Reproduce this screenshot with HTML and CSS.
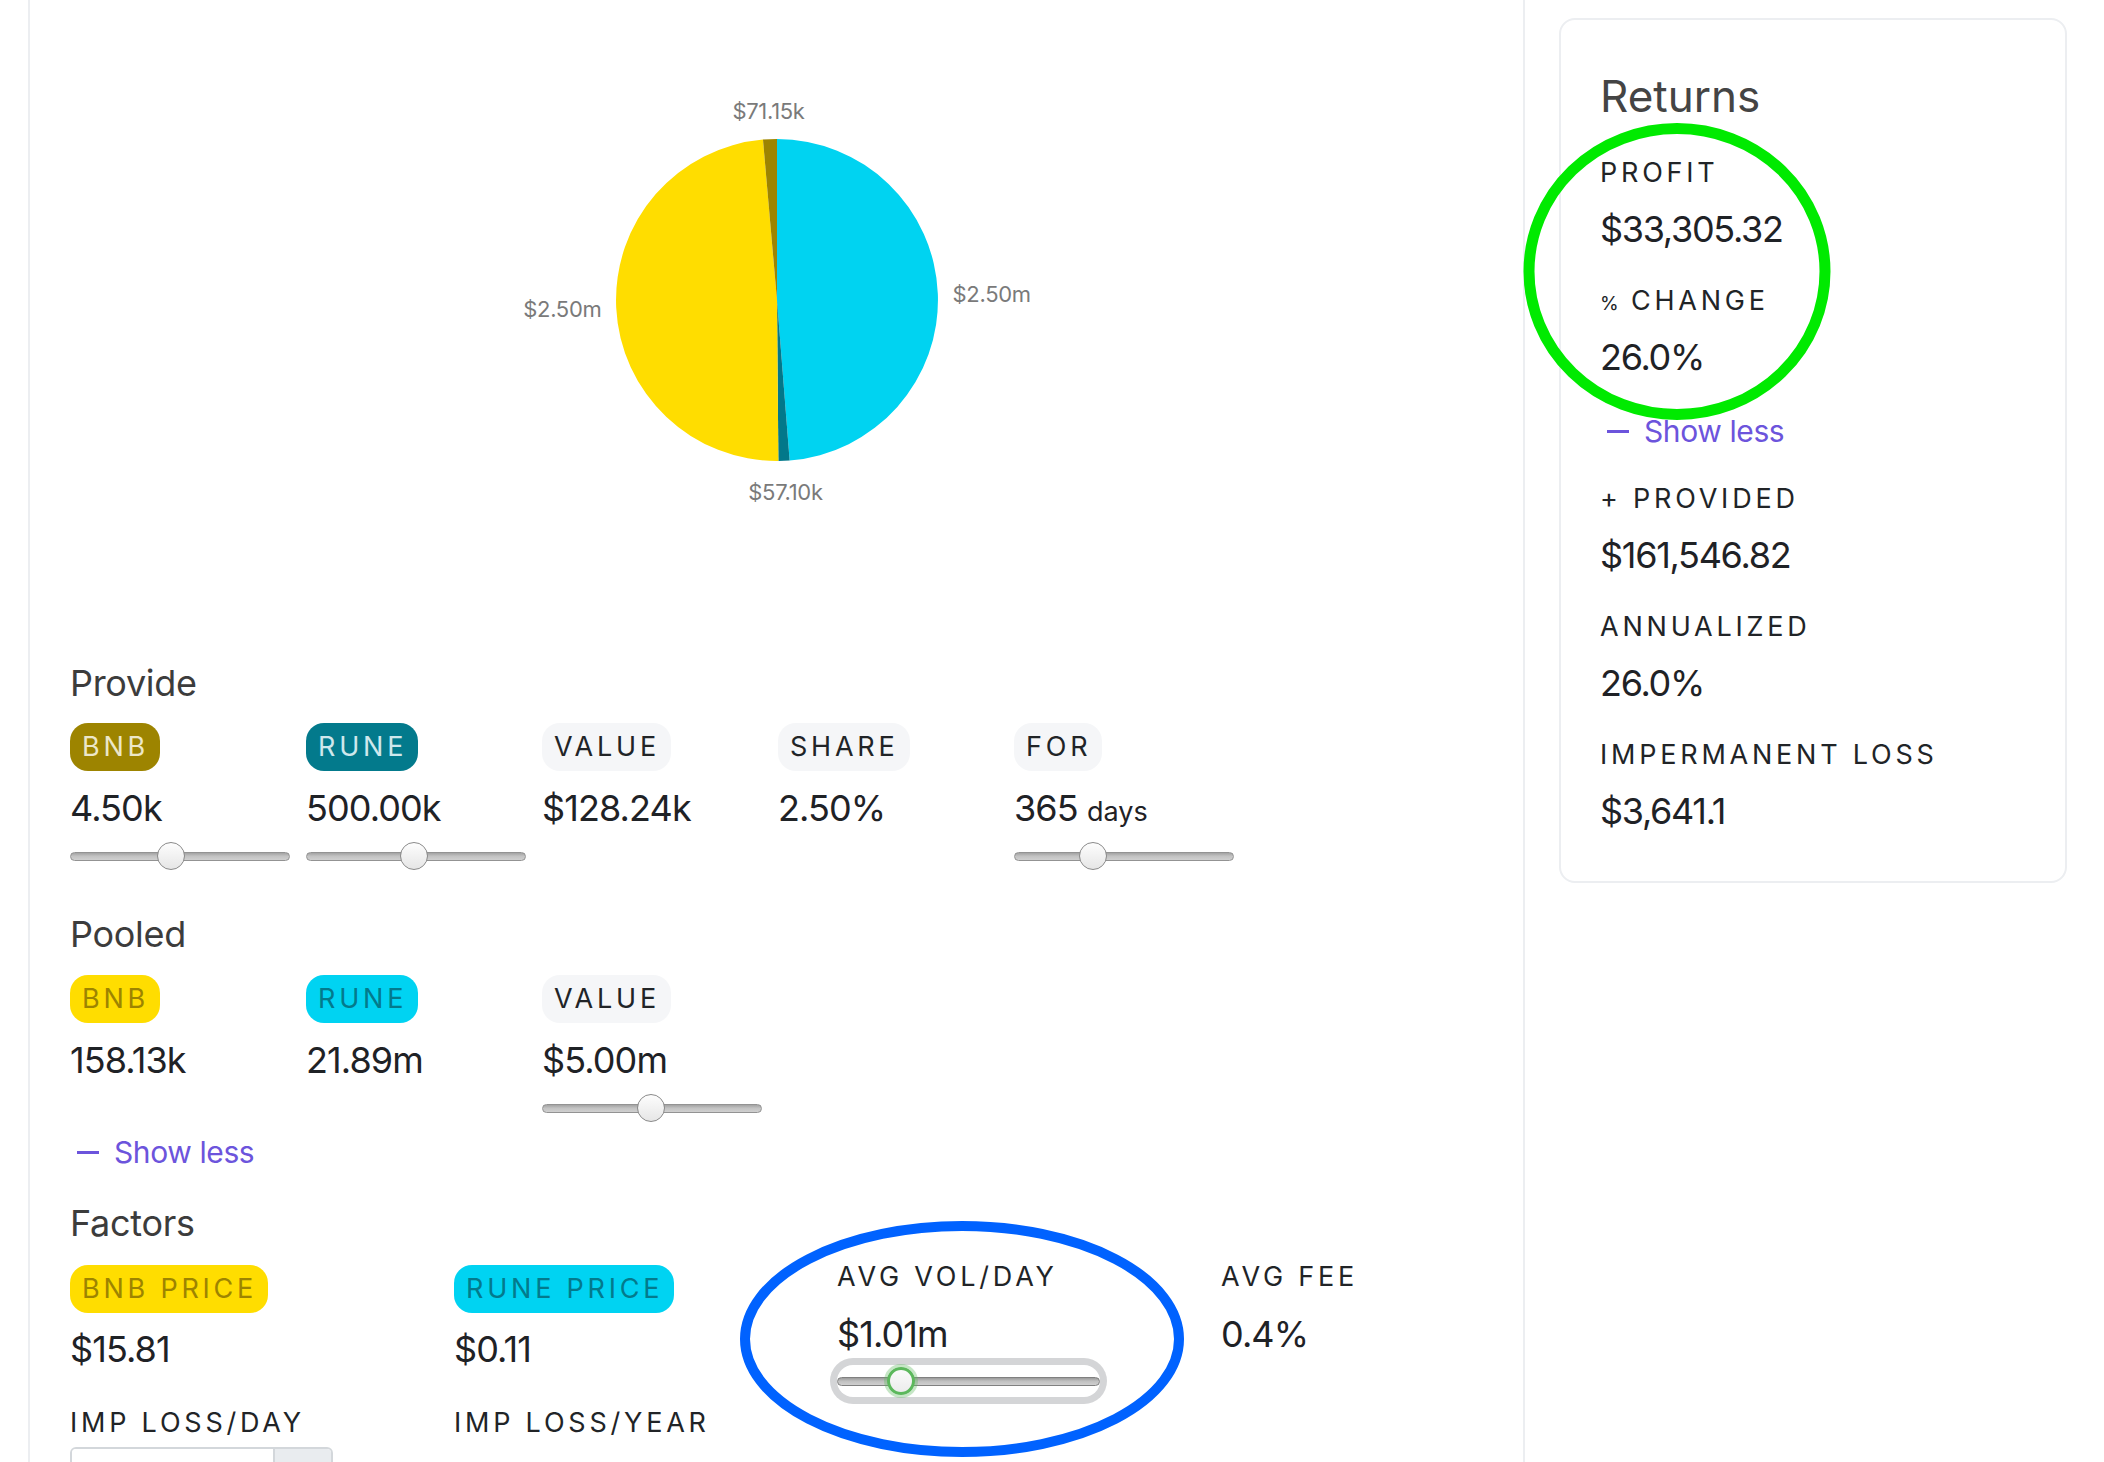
FILE: index.html
```html
<!DOCTYPE html>
<html lang="en">
<head>
<meta charset="utf-8">
<title>Liquidity pool calculator</title>
<link rel="stylesheet" href="styles.css">
</head>
<body>
<div class="page">
  <main class="main">
    <div class="chart">
      <svg class="pie" width="600" height="662" viewBox="0 0 600 662">
        <path fill="#00d3f1" d="M300,300 L300,139 A161,161 0 0 1 312.64,460.50 Z"/>
        <path fill="#02788a" d="M300,300 L312.64,460.50 A161,161 0 0 1 301.39,460.99 Z"/>
        <path fill="#ffdd00" d="M300,300 L301.39,460.99 A161,161 0 0 1 285.97,139.61 Z"/>
        <path fill="#9d8400" d="M300,300 L285.97,139.61 A161,161 0 0 1 300,139 Z"/>
        <text class="pie-label" x="291.5" y="119" text-anchor="middle">$71.15k</text>
        <text class="pie-label" x="475.5" y="302" text-anchor="start">$2.50m</text>
        <text class="pie-label" x="124.5" y="317" text-anchor="end">$2.50m</text>
        <text class="pie-label" x="308.5" y="500" text-anchor="middle">$57.10k</text>
      </svg>
    </div>

    <section class="group group-provide">
      <h2 class="group-title">Provide</h2>
      <div class="cols cols-five">
        <div class="col">
          <span class="badge badge-bnb-dark">BNB</span>
          <div class="val">4.50k</div>
          <input class="rng" type="range" min="0" max="1000" value="453">
        </div>
        <div class="col">
          <span class="badge badge-rune-dark">RUNE</span>
          <div class="val">500.00k</div>
          <input class="rng" type="range" min="0" max="1000" value="492">
        </div>
        <div class="col">
          <span class="badge badge-plain">VALUE</span>
          <div class="val">$128.24k</div>
        </div>
        <div class="col">
          <span class="badge badge-plain">SHARE</span>
          <div class="val">2.50%</div>
        </div>
        <div class="col">
          <span class="badge badge-plain">FOR</span>
          <div class="val">365 <span class="unit">days</span></div>
          <input class="rng" type="range" min="0" max="1000" value="339">
        </div>
      </div>
    </section>

    <section class="group group-pooled">
      <h2 class="group-title">Pooled</h2>
      <div class="cols cols-five">
        <div class="col">
          <span class="badge badge-bnb">BNB</span>
          <div class="val">158.13k</div>
        </div>
        <div class="col">
          <span class="badge badge-rune">RUNE</span>
          <div class="val">21.89m</div>
        </div>
        <div class="col">
          <span class="badge badge-plain">VALUE</span>
          <div class="val">$5.00m</div>
          <input class="rng" type="range" min="0" max="1000" value="495">
        </div>
      </div>
      <div class="show-less show-less-main"><span class="dash"></span><span>Show less</span></div>
    </section>

    <section class="group group-factors">
      <h2 class="group-title">Factors</h2>
      <div class="cols cols-four">
        <div class="col">
          <span class="badge badge-bnb">BNB PRICE</span>
          <div class="val">$15.81</div>
        </div>
        <div class="col">
          <span class="badge badge-rune">RUNE PRICE</span>
          <div class="val">$0.11</div>
        </div>
        <div class="col">
          <div class="label label-top">AVG VOL/DAY</div>
          <div class="val val-after-label">$1.01m</div>
          <input class="rng rng-vol" type="range" min="0" max="1000" value="212">
        </div>
        <div class="col">
          <div class="label label-top">AVG FEE</div>
          <div class="val val-after-label">0.4%</div>
        </div>
        <div class="col">
          <div class="label">IMP LOSS/DAY</div>
          <div class="input-group">
            <input class="field" type="text" aria-label="Impermanent loss per day">
            <span class="addon"></span>
          </div>
        </div>
        <div class="col">
          <div class="label">IMP LOSS/YEAR</div>
        </div>
      </div>
    </section>
  </main>

  <aside class="side">
    <div class="card">
      <h3 class="card-title">Returns</h3>
      <div class="stat">
        <div class="label">PROFIT</div>
        <div class="stat-value">$33,305.32</div>
      </div>
      <div class="stat">
        <div class="label"><span class="pct">%</span> CHANGE</div>
        <div class="stat-value">26.0%</div>
      </div>
      <div class="show-less show-less-card"><span class="dash"></span><span>Show less</span></div>
      <div class="stat">
        <div class="label">+ PROVIDED</div>
        <div class="stat-value">$161,546.82</div>
      </div>
      <div class="stat">
        <div class="label">ANNUALIZED</div>
        <div class="stat-value">26.0%</div>
      </div>
      <div class="stat">
        <div class="label">IMPERMANENT LOSS</div>
        <div class="stat-value">$3,641.1</div>
      </div>
    </div>
  </aside>

  <svg class="marks" width="2104" height="1462" viewBox="0 0 2104 1462" aria-hidden="true">
    <ellipse cx="1677" cy="271.5" rx="148" ry="143" fill="none" stroke="#00ea00" stroke-width="11"/>
    <ellipse cx="962" cy="1339" rx="217" ry="113" fill="none" stroke="#0062ff" stroke-width="10"/>
  </svg>
</div>
</body>
</html>
```

FILE: styles.css
```css
html, body {
  margin: 0;
  padding: 0;
  background: #ffffff;
  overflow: hidden;
}

body {
  font-family: Inter, "Noto Sans", "Liberation Sans", sans-serif;
  color: #1f2226;
}

.page {
  position: relative;
  display: flex;
  align-items: stretch;
  min-height: 1462px;
}

/* ---------- main column ---------- */
.main {
  box-sizing: border-box;
  flex: none;
  width: 1497px;
  margin-left: 28px;
  padding: 0 40px;
  border-left: 2px solid #eceef1;
  border-right: 2px solid #eceef1;
}

.chart {
  height: 661px;
  display: flex;
  justify-content: center;
}

.pie {
  display: block;
}

.pie-label {
  font-family: Inter, "Noto Sans", sans-serif;
  font-size: 22px;
  fill: #7a7a7a;
  letter-spacing: -0.3px;
}

.group-title {
  margin: 0;
  height: 44px;
  font-size: 36px;
  line-height: 44px;
  font-weight: 400;
  color: #3c3c3c;
  letter-spacing: -0.3px;
}

.group-pooled .group-title {
  margin-top: 42px;
}

.group-factors .group-title {
  margin-top: 31px;
}

.cols {
  display: grid;
}

.cols-five {
  grid-template-columns: repeat(5, 236px);
  margin-top: 18px;
}

.group-pooled .cols-five {
  margin-top: 19px;
}

.cols-four {
  grid-template-columns: 384px 383px 384px 1fr;
  row-gap: 10px;
  margin-top: 20px;
}

.col {
  display: flex;
  flex-direction: column;
  align-items: flex-start;
}

/* ---------- badges & labels ---------- */
.badge {
  display: inline-block;
  height: 48px;
  line-height: 48px;
  padding: 0 11px 0 12px;
  border-radius: 18px;
  font-size: 27px;
  letter-spacing: 0.14em;
  white-space: nowrap;
}

.badge-bnb-dark {
  background: #9d8400;
  color: #ece7c8;
}

.badge-rune-dark {
  background: #037a8c;
  color: #cfe8ec;
}

.badge-bnb {
  background: #ffdd00;
  color: #9d8400;
}

.badge-rune {
  background: #00d3f2;
  color: #037a8c;
}

.badge-plain {
  background: #f5f6f8;
  color: #212427;
}

.label {
  height: 32px;
  font-size: 27px;
  line-height: 32px;
  letter-spacing: 0.14em;
  color: #212427;
  white-space: nowrap;
}

.label-top {
  height: 24px;
  line-height: 24px;
}

.pct {
  font-size: 19px;
  line-height: 0;
  letter-spacing: 0.05em;
}

/* ---------- values ---------- */
.val {
  height: 44px;
  margin-top: 15px;
  font-size: 36px;
  line-height: 44px;
  letter-spacing: -0.9px;
  color: #1f2226;
  white-space: nowrap;
}

.group-factors .val {
  margin-top: 14px;
}

.group-factors .val-after-label {
  margin-top: 23px;
}

.unit {
  font-size: 27px;
  line-height: 0;
  letter-spacing: 0;
}

/* ---------- sliders ---------- */
.rng {
  -webkit-appearance: none;
  appearance: none;
  display: block;
  box-sizing: border-box;
  width: 220px;
  height: 28px;
  margin: 12px 0 0;
  padding: 0;
  background: transparent;
}

.rng::-webkit-slider-runnable-track {
  box-sizing: border-box;
  height: 9px;
  border-radius: 5px;
  border: 1px solid #939393;
  background: linear-gradient(#a3a3a3, #c2c2c2 45%, #d0d0d0);
}

.rng::-webkit-slider-thumb {
  -webkit-appearance: none;
  appearance: none;
  box-sizing: border-box;
  width: 28px;
  height: 28px;
  margin-top: -10.5px;
  border-radius: 50%;
  border: 1.5px solid #8a8a8a;
  background: linear-gradient(#fdfdfd, #e6e6e6);
}

.rng-vol {
  width: 263px;
  height: 32px;
  margin-top: 9px;
  border-radius: 16px;
  background: #ffffff;
  box-shadow: 0 0 0 7px #d4d5d7;
}

.rng-vol::-webkit-slider-runnable-track {
  border-color: #808080;
  background: linear-gradient(#9a9a9a, #c0c0c0 45%, #cfcfcf);
}

.rng-vol::-webkit-slider-thumb {
  border: 3px solid #5cb85c;
  background: linear-gradient(#fafafa, #ececec);
  box-shadow: 0 0 0 3px rgba(92, 184, 92, 0.35);
}

/* ---------- show less ---------- */
.show-less {
  display: flex;
  align-items: center;
  height: 36px;
  font-size: 30px;
  line-height: 36px;
  letter-spacing: -0.4px;
  color: #6c54dc;
}

.show-less-main {
  margin-top: 12px;
}

.dash {
  display: block;
  width: 22px;
  height: 3px;
  margin: 0 15px 0 7px;
  background: currentColor;
}

/* ---------- input ---------- */
.input-group {
  box-sizing: border-box;
  display: flex;
  width: 263px;
  height: 52px;
  margin-top: 8px;
  border: 2px solid #d3d7db;
  border-radius: 6px;
  overflow: hidden;
}

.field {
  flex: 1;
  min-width: 0;
  border: 0;
  padding: 0 12px;
  font: inherit;
  background: #ffffff;
}

.addon {
  width: 56px;
  border-left: 2px solid #d3d7db;
  background: #e9ecef;
}

/* ---------- sidebar ---------- */
.side {
  flex: none;
  padding: 18px 0 0 34px;
}

.card {
  box-sizing: border-box;
  width: 508px;
  padding: 50px 40px 48px 39px;
  border: 2px solid #eceef1;
  border-radius: 16px;
}

.card-title {
  margin: 0;
  height: 53px;
  font-size: 44px;
  line-height: 53px;
  font-weight: 400;
  color: #444444;
  letter-spacing: 0;
}

.stat {
  margin-top: 34px;
}

.stat-value {
  height: 44px;
  margin-top: 18px;
  font-size: 36px;
  line-height: 44px;
  letter-spacing: -1.3px;
  color: #1f2226;
  white-space: nowrap;
}

.show-less-card {
  margin-top: 34px;
}

/* ---------- annotation overlay ---------- */
.marks {
  position: absolute;
  left: 0;
  top: 0;
  pointer-events: none;
}
```
